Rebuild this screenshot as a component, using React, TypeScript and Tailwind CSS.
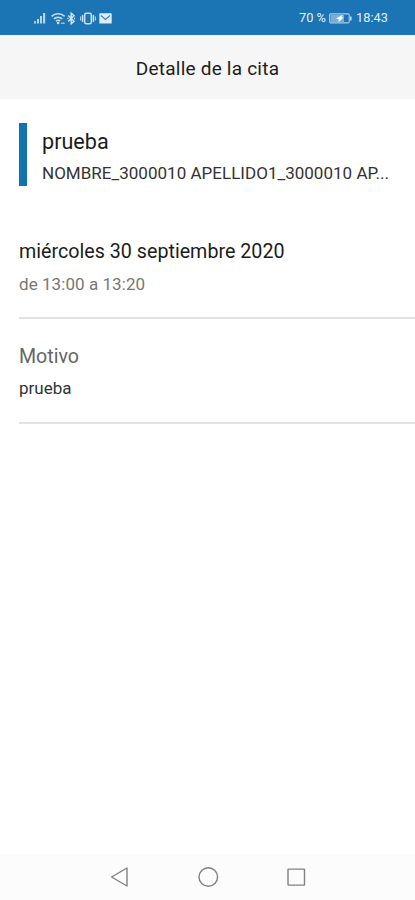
import type { ReactNode } from 'react'

const APPOINTMENT = {
  title: 'prueba',
  patient: 'NOMBRE_3000010 APELLIDO1_3000010 AP...',
  date: 'miércoles 30 septiembre 2020',
  time: 'de 13:00 a 13:20',
  reason: 'prueba',
}

function SignalIcon() {
  return (
    <svg width="12" height="12" viewBox="0 0 12 12" fill="#b5d4e9">
      <rect x="0" y="9.2" width="2" height="2.3" />
      <rect x="3" y="7" width="2" height="4.5" />
      <rect x="6" y="4" width="2" height="7.5" />
      <rect x="9" y="1" width="2.2" height="10.5" />
    </svg>
  )
}

function WifiIcon() {
  return (
    <svg width="16" height="13" viewBox="0 0 16 13" fill="none" stroke="#c9e0f0" strokeWidth="1.5">
      <path d="M.6 4.4a9.3 9.3 0 0 1 13 0" />
      <path d="M2.9 6.9a6 6 0 0 1 8.4 0" />
      <path d="M5 9.2a3 3 0 0 1 4.2 0" />
      <circle cx="7.1" cy="11" r="0.6" />
      <path d="M10.3 11.3h3.2" strokeWidth="1.6" strokeDasharray="1.3 .6" />
    </svg>
  )
}

function BluetoothIcon() {
  return (
    <svg width="9" height="13" viewBox="0 0 9 13" fill="none" stroke="#d3e6f3" strokeWidth="1.4">
      <path d="M1.2 3.6 7 9.2 4.2 11.8V1.2L7 3.8 1.2 9.4" />
      <path d="M.3 6.5h1.2M7 6.5h1.2" />
    </svg>
  )
}

function VibrateIcon() {
  return (
    <svg width="16" height="13" viewBox="0 0 16 13" fill="none" stroke="#c9e0f0" strokeWidth="1.5">
      <rect x="4.7" y="1.2" width="6.6" height="10.6" rx="1.6" />
      <path d="M2.6 3v7M13.4 3v7" />
      <path d="M.7 4.5v4M15.3 4.5v4" strokeWidth="1" />
    </svg>
  )
}

function MailIcon() {
  return (
    <svg width="13" height="11" viewBox="0 0 13 11">
      <rect x="0.3" y="0.3" width="12.4" height="10.2" rx="0.6" fill="#dcebf5" />
      <path d="m2 2.6 4.5 3.8L11 2.6" fill="none" stroke="#3c88be" strokeWidth="1.3" />
    </svg>
  )
}

function BatteryIcon() {
  return (
    <svg width="23" height="11" viewBox="0 0 23 11">
      <rect x="0.6" y="0.9" width="19.6" height="9" rx="1.2" fill="none" stroke="#a9cde5" strokeWidth="1.1" />
      <rect x="1.5" y="1.8" width="13.5" height="7.2" fill="#79afd5" />
      <path d="M13.6 1.8 7 5.6l2.8.8-.4 2.8 5.2-4.6-1.8-.4z" fill="#fff" />
      <path d="M21.8 3.4v4" stroke="#c9e0f0" strokeWidth="1.5" />
    </svg>
  )
}

function StatusBar() {
  return (
    <div className="flex h-[35px] shrink-0 items-center justify-between bg-[#1b74b3] pl-[34px] pr-[27px] pt-px text-[#e3f0f8]">
      <div className="flex items-center">
        <SignalIcon />
        <span className="ml-[5px]"><WifiIcon /></span>
        <span><BluetoothIcon /></span>
        <span className="ml-[4px]"><VibrateIcon /></span>
        <span className="ml-[3px]"><MailIcon /></span>
      </div>
      <div className="flex items-center pt-px text-[12.8px] leading-none">
        <span className="w-[30px] whitespace-nowrap">70 %</span>
        <BatteryIcon />
        <span className="ml-1 w-8 whitespace-nowrap">18:43</span>
      </div>
    </div>
  )
}

function Section({ children }: { children: ReactNode }) {
  return <section className="ml-[19px] border-b-2 border-[#e2e2e2]">{children}</section>
}

function NavigationBar() {
  return (
    <nav className="flex h-[46px] shrink-0 items-center justify-center bg-[#fcfcfc]">
      <svg width="200" height="24" viewBox="0 0 200 24" fill="none" stroke="#808080" strokeWidth="1.4" strokeLinejoin="round">
        <path d="M3.6 12 19 3v18z" />
        <circle cx="100.3" cy="12" r="9.3" />
        <rect x="180" y="4.1" width="16.5" height="16" rx="0.5" />
      </svg>
    </nav>
  )
}

export default function App() {
  return (
    <div className="flex h-screen flex-col overflow-hidden bg-white font-[Roboto,sans-serif] text-[#1c1c1c]">
      <StatusBar />
      <header className="flex h-[64px] shrink-0 items-center justify-center border-t border-[#fdfdfd] bg-[#f6f6f6] pt-[3px]">
        <h1 className="text-[19px] tracking-[0.22px]">Detalle de la cita</h1>
      </header>

      <main className="flex-1">
        <div className="ml-[19px] mt-6 flex h-[63px] border-l-8 border-[#1173b0] pl-[15px]">
          <div>
            <h2 className="mt-[5px] text-[21.6px] leading-7">{APPOINTMENT.title}</h2>
            <p className="mt-[5px] whitespace-nowrap text-[17px] leading-6 tracking-[0.02px] text-[#333]">
              {APPOINTMENT.patient}
            </p>
          </div>
        </div>

        <div className="mt-[52px]">
          <Section>
            <h2 className="text-[19.7px] leading-7">{APPOINTMENT.date}</h2>
            <p className="mt-1.5 pb-[21px] text-[17px] leading-6 tracking-[0.06px] text-[#777]">
              {APPOINTMENT.time}
            </p>
          </Section>
          <Section>
            <h3 className="pt-6 text-[19.6px] leading-7 text-[#666]">Motivo</h3>
            <p className="mt-[5px] pb-[22px] text-[17px] leading-6 text-[#333]">{APPOINTMENT.reason}</p>
          </Section>
        </div>
      </main>

      <NavigationBar />
    </div>
  )
}
